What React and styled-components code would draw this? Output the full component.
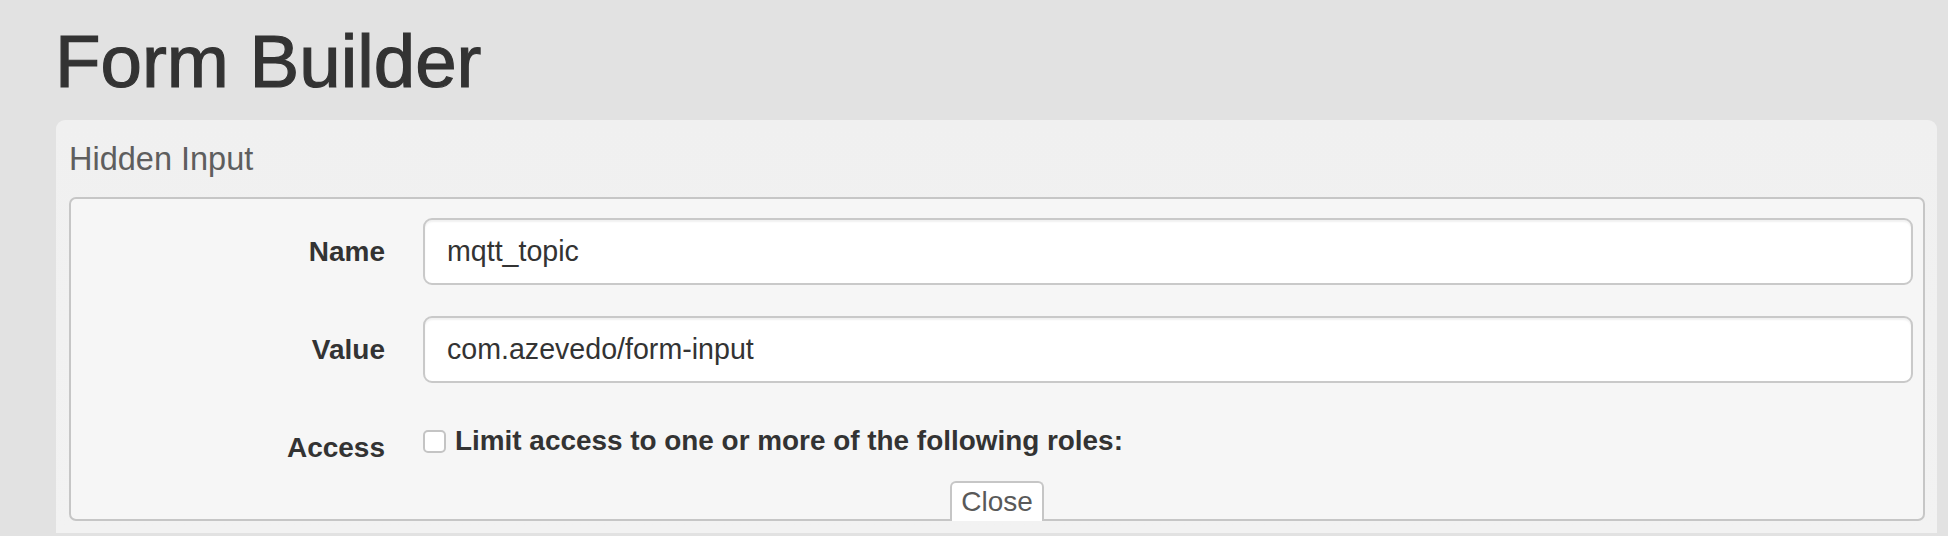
import React from "react";
import styled, { createGlobalStyle } from "styled-components";

const GlobalStyle = createGlobalStyle`
  html, body {
    margin: 0;
    padding: 0;
    background: #e2e2e2;
  }
  body {
    font-family: "Liberation Sans", Arial, Helvetica, sans-serif;
    color: #333;
  }
`;

const Page = styled.div`
  padding: 0 11px 0 56px;
  background: #e2e2e2;
  min-height: 536px;
  box-sizing: border-box;
`;

const Title = styled.h1`
  margin: 25px 0 0 -1px;
  font-size: 74.5px;
  line-height: 74px;
  font-weight: 400;
  color: #333;
  -webkit-text-stroke: 1.2px #333;
`;

const Panel = styled.section`
  margin-top: 21px;
  background: linear-gradient(#f0f0f0, #f2f2f2);
  border-radius: 9px 9px 0 0;
  padding: 19px 12px 12px 13px;
`;

const PanelHeading = styled.div`
  font-size: 32.5px;
  line-height: 40px;
  color: #5e5e5e;
  margin-bottom: 18px;
`;

const FieldBox = styled.div`
  background: #f6f6f6;
  border: 2px solid #c6c6c6;
  border-radius: 7px;
  padding: 19px 10px 0 0;
`;

const FormGrid = styled.div`
  display: grid;
  grid-template-columns: 314px 1fr;
  column-gap: 38px;
  row-gap: 31px;
`;

const Label = styled.label`
  text-align: right;
  font-weight: 700;
  font-size: 28px;
  line-height: 67px;
  color: #333;
`;

const TextInput = styled.input`
  box-sizing: border-box;
  width: 100%;
  height: 67px;
  border: 2px solid #c9c9c9;
  border-radius: 9px;
  background: #fff;
  box-shadow: inset 0 2px 2px rgba(0, 0, 0, 0.06);
  padding: 0 20px 0 22px;
  font-family: "Liberation Sans", Arial, Helvetica, sans-serif;
  font-size: 28.6px;
  color: #333;
  outline: none;
`;

const CheckRow = styled.div`
  display: flex;
  align-items: center;
  gap: 9px;
  padding-top: 7px;
  line-height: 40px;
  align-self: start;
`;

const CheckBox = styled.span`
  box-sizing: border-box;
  width: 23px;
  height: 23px;
  border: 2px solid #c4c4c4;
  border-radius: 5px;
  background: #fff;
  flex: none;
`;

const CheckText = styled.span`
  font-weight: 700;
  font-size: 27.9px;
  color: #333;
`;

const CloseBar = styled.div`
  display: flex;
  justify-content: center;
  margin-bottom: -2px;
  padding-left: 10px;
`;

const CloseTab = styled.button`
  box-sizing: border-box;
  height: 40px;
  padding: 0 9px;
  border: 2px solid #c6c6c6;
  border-bottom: none;
  border-radius: 6px 6px 0 0;
  background: #fff;
  font-family: "Liberation Sans", Arial, Helvetica, sans-serif;
  font-size: 28px;
  line-height: 38px;
  color: #595959;
  cursor: pointer;
`;

export default function App() {
  return (
    <>
      <GlobalStyle />
      <Page>
        <Title>Form Builder</Title>
        <Panel>
          <PanelHeading>Hidden Input</PanelHeading>
          <FieldBox>
            <FormGrid>
              <Label>Name</Label>
              <TextInput defaultValue="mqtt_topic" />
              <Label>Value</Label>
              <TextInput defaultValue="com.azevedo/form-input" />
              <Label>Access</Label>
              <CheckRow>
                <CheckBox />
                <CheckText>Limit access to one or more of the following roles:</CheckText>
              </CheckRow>
            </FormGrid>
            <CloseBar>
              <CloseTab>Close</CloseTab>
            </CloseBar>
          </FieldBox>
        </Panel>
      </Page>
    </>
  );
}
